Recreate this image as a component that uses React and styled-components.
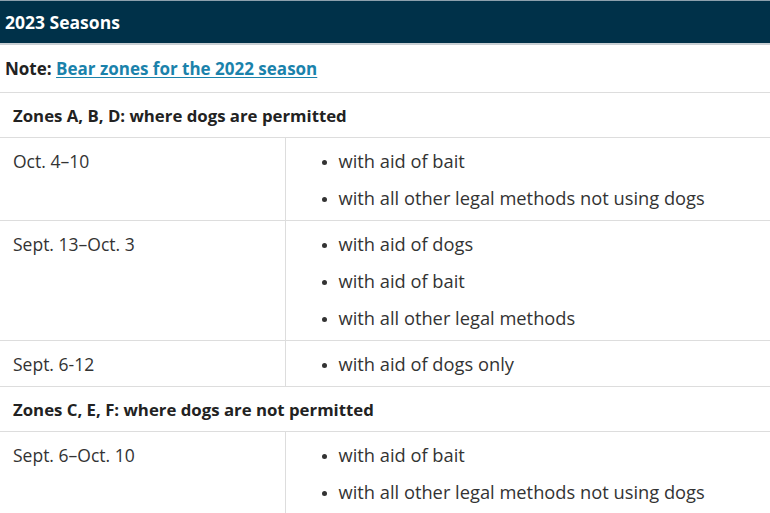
import React from 'react'
import styled, { createGlobalStyle } from 'styled-components'

const GlobalStyle = createGlobalStyle`
  html, body {
    margin: 0;
    padding: 0;
    background: #ffffff;
  }
  body {
    font-family: "Open Sans", "Noto Sans", sans-serif;
    color: #333333;
  }
`

const SeasonTable = styled.table`
  width: 770px;
  border-collapse: collapse;
  table-layout: fixed;
  font-size: 17.5px;
`

const DateCol = styled.col`
  width: 285px;
`

const TitleCell = styled.th`
  background: #003149;
  color: #ffffff;
  text-align: left;
  font-size: 17.5px;
  font-weight: 700;
  height: 42px;
  padding: 0 5px;
  border-bottom: 2px solid #c9cfd3;
  border-top: 1px solid #8ca0ad;
`

const NoteCell = styled.td`
  height: 47px;
  padding: 0 5px;
  font-weight: 700;
  color: #222222;
  font-size: 17px;
  border-bottom: 1px solid #dddddd;
`

const NoteLink = styled.a`
  color: #1a82ab;
  text-decoration: underline;
  text-underline-offset: 2px;
`

const ZoneCell = styled.td`
  height: 44px;
  padding: 0 13px;
  font-weight: 700;
  color: #222222;
  font-size: 16.8px;
  border-bottom: 1px solid #dddddd;
`

const DateCell = styled.td`
  vertical-align: top;
  padding: 11px 13px 10px;
  line-height: 24px;
  border-bottom: 1px solid #dddddd;
  border-right: 1px solid #dddddd;
`

const MethodCell = styled.td`
  vertical-align: top;
  padding: 11px 8px 10px 0;
  line-height: 24px;
  font-size: 18.3px;
  border-bottom: 1px solid #dddddd;
`

const MethodList = styled.ul`
  margin: 0;
  padding: 0 0 0 53px;
  list-style: disc;
  white-space: nowrap;

  li + li {
    margin-top: 13px;
  }
  li::marker {
    font-size: 14px;
  }
`

const seasons = [
  {
    zone: 'Zones A, B, D: where dogs are permitted',
    rows: [
      { dates: 'Oct. 4–10', methods: ['with aid of bait', 'with all other legal methods not using dogs'] },
      { dates: 'Sept. 13–Oct. 3', methods: ['with aid of dogs', 'with aid of bait', 'with all other legal methods'] },
      { dates: 'Sept. 6-12', methods: ['with aid of dogs only'] },
    ],
  },
  {
    zone: 'Zones C, E, F: where dogs are not permitted',
    rows: [
      { dates: 'Sept. 6–Oct. 10', methods: ['with aid of bait', 'with all other legal methods not using dogs'] },
    ],
  },
]

const App = () => {
  return (
    <>
      <GlobalStyle />
      <SeasonTable>
        <colgroup>
          <DateCol />
          <col />
        </colgroup>
        <thead>
          <tr>
            <TitleCell colSpan={2}>2023 Seasons</TitleCell>
          </tr>
        </thead>
        <tbody>
          <tr>
            <NoteCell colSpan={2}>
              Note: <NoteLink href="#">Bear zones for the 2022 season</NoteLink>
            </NoteCell>
          </tr>
          {seasons.map((group) => (
            <React.Fragment key={group.zone}>
              <tr>
                <ZoneCell colSpan={2}>{group.zone}</ZoneCell>
              </tr>
              {group.rows.map((row) => (
                <tr key={row.dates}>
                  <DateCell>{row.dates}</DateCell>
                  <MethodCell>
                    <MethodList>
                      {row.methods.map((m) => (
                        <li key={m}>{m}</li>
                      ))}
                    </MethodList>
                  </MethodCell>
                </tr>
              ))}
            </React.Fragment>
          ))}
        </tbody>
      </SeasonTable>
    </>
  )
}

export default App
